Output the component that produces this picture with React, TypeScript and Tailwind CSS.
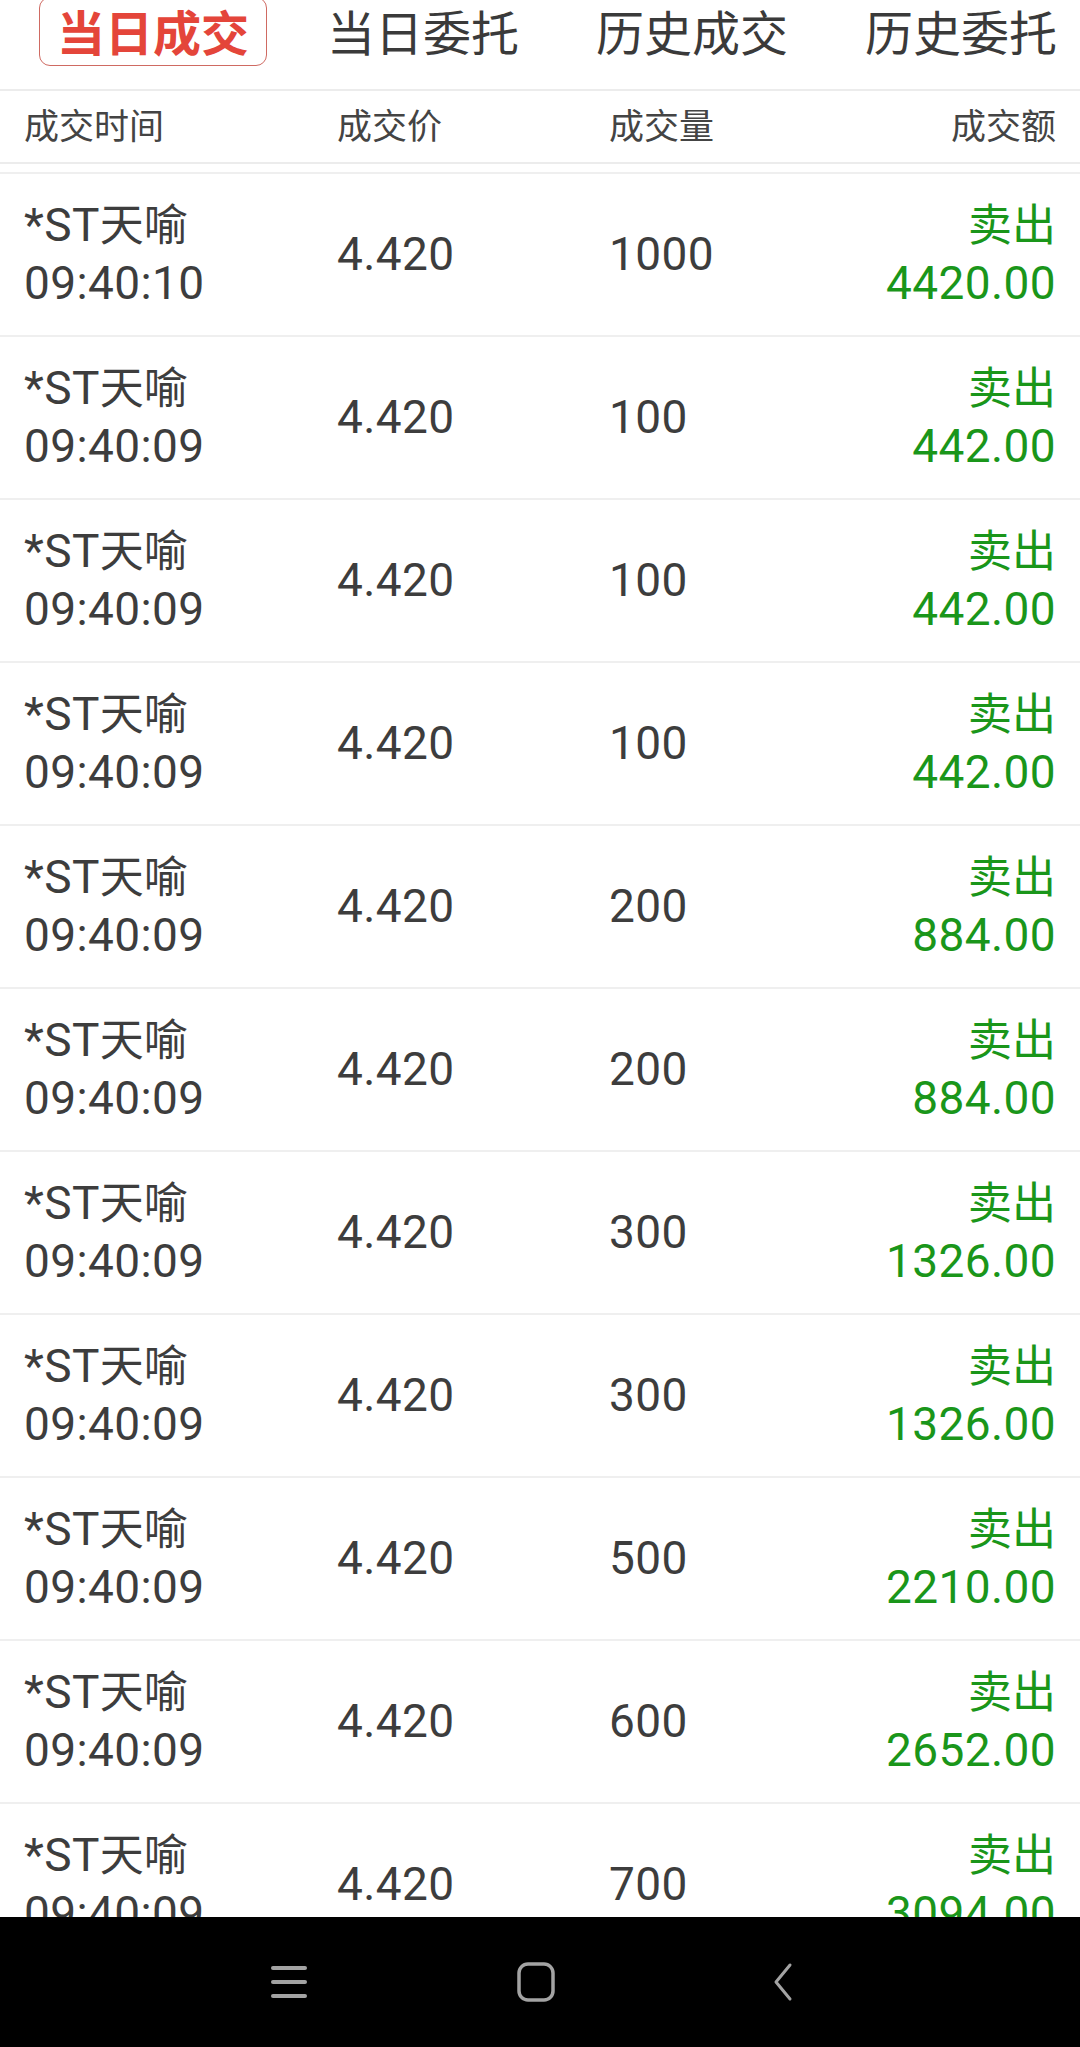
import React from "react";

const rows = [
  { t: "09:40:10", v: "1000", a: "4420.00" },
  { t: "09:40:09", v: "100", a: "442.00" },
  { t: "09:40:09", v: "100", a: "442.00" },
  { t: "09:40:09", v: "100", a: "442.00" },
  { t: "09:40:09", v: "200", a: "884.00" },
  { t: "09:40:09", v: "200", a: "884.00" },
  { t: "09:40:09", v: "300", a: "1326.00" },
  { t: "09:40:09", v: "300", a: "1326.00" },
  { t: "09:40:09", v: "500", a: "2210.00" },
  { t: "09:40:09", v: "600", a: "2652.00" },
  { t: "09:40:09", v: "700", a: "3094.00" },
];

const tabs = ["当日成交", "当日委托", "历史成交", "历史委托"];

export default function App() {
  return (
    <div
      className="w-[1080px] h-[2047px] flex flex-col overflow-hidden bg-white text-[#3d3d3d]"
      style={{ fontFamily: "Roboto, 'Noto Sans CJK SC', sans-serif" }}
    >
      {/* Tabs */}
      <div className="h-[89px] shrink-0 flex items-start pl-[39px]">
        {tabs.map((t, i) =>
          i === 0 ? (
            <div
              key={t}
              className="-mt-[3px] h-[69px] px-[17px] flex items-center border-[1.5px] border-[#cf6a62] rounded-[11px] text-[48px] leading-none font-bold text-[#e4453a]"
            >
              <span className="pt-[6px]">{t}</span>
            </div>
          ) : (
            <div
              key={t}
              className={`${i === 1 ? "ml-[60px]" : "ml-[77px]"} h-[66px] pt-[4px] flex items-center text-[48px] leading-none text-[#3a3a3a]`}
            >
              {t}
            </div>
          )
        )}
      </div>
      <div className="h-[2px] shrink-0 bg-[#ececec]" />

      {/* Header */}
      <div className="h-[71px] shrink-0 flex items-center pt-[4px] px-[24px] text-[35px] text-[#444444]">
        <div className="w-[313px]">成交时间</div>
        <div className="w-[272px]">成交价</div>
        <div className="flex-1">成交量</div>
        <div className="text-right">成交额</div>
      </div>
      <div className="h-[2px] shrink-0 bg-[#ececec]" />

      {/* List */}
      <div className="flex-1 overflow-hidden">
        <div className="h-[8px]" />
        {rows.map((r, i) => (
          <div
            key={i}
            className="h-[163px] border-t-2 border-[#efefef] flex items-center px-[24px] text-[46px] leading-[57px] tracking-[0.4px]"
          >
            <div className="w-[313px] flex flex-col">
              <span>
                *ST<span className="text-[44px] tracking-normal">天喻</span>
              </span>
              <span>{r.t}</span>
            </div>
            <div className="w-[272px]">4.420</div>
            <div className="flex-1">{r.v}</div>
            <div className="flex flex-col items-end text-[#1a961a]">
              <span className="text-[44px] tracking-normal">卖出</span>
              <span>{r.a}</span>
            </div>
          </div>
        ))}
      </div>

      {/* Nav bar */}
      <div className="h-[130px] shrink-0 bg-black flex items-center pl-[165px]">
        <div className="w-[247px] flex justify-center">
          <svg width="40" height="36" viewBox="0 0 40 36">
            <rect x="2" y="2" width="36" height="4" rx="2" fill="#a3a3a3" />
            <rect x="2" y="16" width="36" height="4" rx="2" fill="#a3a3a3" />
            <rect x="2" y="30" width="36" height="4" rx="2" fill="#a3a3a3" />
          </svg>
        </div>
        <div className="w-[247px] flex justify-center">
          <svg width="40" height="42" viewBox="0 0 40 42">
            <rect x="3" y="3" width="34" height="36" rx="9" fill="none" stroke="#a3a3a3" strokeWidth="3.5" />
          </svg>
        </div>
        <div className="w-[247px] flex justify-center">
          <svg width="26" height="40" viewBox="0 0 26 40">
            <path d="M20 3 L6 20 L20 37" fill="none" stroke="#a3a3a3" strokeWidth="3" strokeLinecap="round" strokeLinejoin="round" />
          </svg>
        </div>
      </div>
    </div>
  );
}
